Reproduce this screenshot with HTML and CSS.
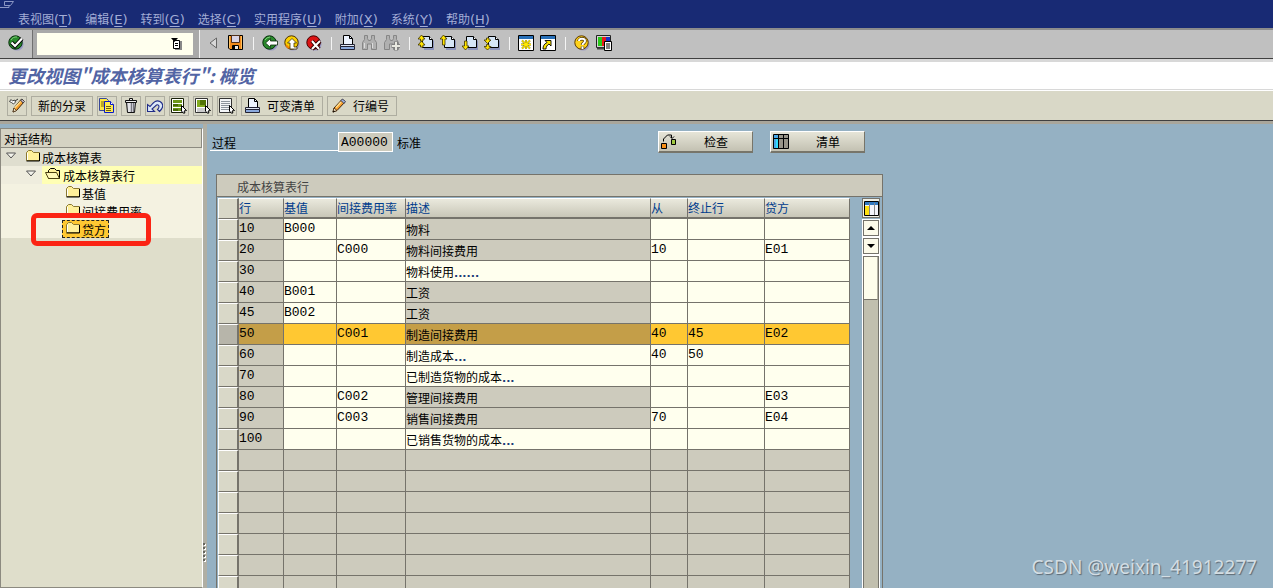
FILE: index.html
```html
<!DOCTYPE html>
<html lang="zh-CN">
<head>
<meta charset="utf-8">
<title>更改视图"成本核算表行": 概览</title>
<link rel="stylesheet" href="styles.css">
</head>
<body>
<svg class="defs" aria-hidden="true">
  <symbol id="i-ok" viewBox="0 0 16 16"><circle cx="9" cy="9" r="6.6" fill="#9a9ac4"/><circle cx="7.5" cy="7.5" r="6.7" fill="#2a8a2c" stroke="#062e0a"/><path d="M3 5a6 6 0 0 1 6-3" stroke="#7fd07a" fill="none"/><path d="M3.5 7.5 7 11 14 3.5" fill="none" stroke="#000" stroke-width="4"/><path d="M3.5 7.5 7 11 14 3.5" fill="none" stroke="#fff" stroke-width="2.2"/></symbol>
  <symbol id="i-save" viewBox="0 0 16 16"><path d="M.5.5h14v14H2L.5 13z" fill="#f08a1c" stroke="#000"/><path d="M3.500.500h8v7h-8z" fill="#d9d4e6" stroke="#50301a"/><path d="M4.500 10.500h6v4h-6z" fill="#e8e8e8" stroke="#000"/><path d="M5 11h2v3H5z" fill="#000"/><path d="M1.500 1v12M13.500 1v13" stroke="#ffc060"/></symbol>
  <symbol id="i-back" viewBox="0 0 16 16"><circle cx="9" cy="9" r="6.600" fill="#9a9ac4"/><circle cx="7.500" cy="7.500" r="6.700" fill="#2a8a2c" stroke="#062e0a"/><path d="M3 5a6 6 0 0 1 5-3" stroke="#7fd07a" fill="none"/><path d="M3.500 8 8.500 3.500v2.500h7v4h-7v2.500z" fill="#fff" stroke="#0c2a0c" stroke-width=".8"/></symbol>
  <symbol id="i-exit" viewBox="0 0 16 16"><circle cx="9" cy="9" r="6.600" fill="#9a9ac4"/><circle cx="7.500" cy="7.500" r="6.700" fill="#fbd000" stroke="#4a3000"/><path d="M2 10a6 6 0 0 0 4 3" stroke="#f08000" stroke-width="2" fill="none"/><path d="M8 3.500 12.500 8H10v4h3v2H6V8H3.500z" fill="#fff" stroke="#403000" stroke-width=".8"/></symbol>
  <symbol id="i-cancel" viewBox="0 0 16 16"><circle cx="9" cy="9" r="6.600" fill="#9a9ac4"/><circle cx="7.500" cy="7.500" r="6.700" fill="#dc1414" stroke="#400"/><path d="m6 6 7 8m1-8-8 8" stroke="#300" stroke-width="4"/><path d="m6 6 7 8m1-8-8 8" stroke="#fff" stroke-width="2"/></symbol>
  <symbol id="i-print" viewBox="0 0 16 16"><path d="M3.500.500h6l3 3v6h-9z" fill="#eef4ff" stroke="#000"/><path d="M9.500.500v3h3" fill="none" stroke="#000"/><path d="M.500 9.500h14v2H.500z" fill="#dfe6f4" stroke="#223"/><path d="M.500 11.500h14v3H.500z" fill="#8aa8dc" stroke="#223"/></symbol>
  <symbol id="i-find" viewBox="0 0 16 16"><path d="M2.500.500h3v3l1 2h2l1-2v-3h3v4l2 3v7h-5V9h-4v5.500h-5v-7l2-3z" fill="#b0b0b0" stroke="#868686"/><path d="M2.500 8v5m8-5v5" stroke="#dcdcdc"/></symbol>
  <symbol id="i-next" viewBox="0 0 16 16"><path d="M2.500.500h3v3l1 2h2l1-2v-3h3v4l2 3v7h-5V9h-4v5.500h-5v-7l2-3z" fill="#b0b0b0" stroke="#868686"/><path d="M12 6.500v9M7.500 11h9" stroke="#808080" stroke-width="4"/><path d="M12 7v8M8 11h8" stroke="#e8e8e0" stroke-width="2"/></symbol>
  <symbol id="i-page" viewBox="0 0 16 16"><path d="M6 4h8l2 2v9H6z" fill="#8c94bc"/><path d="M4.500 1.500h7l3 3v8h-10z" fill="#d6e6f6" stroke="#000"/><path d="M11.500 1.500v3h3" fill="#fff" stroke="#000"/></symbol>
  <symbol id="i-first" viewBox="0 0 16 16"><use href="#i-page"/><path d="M3.500 0 7 4H5v2H2.500V4H0zM3.500 6 7 10H5v2H2.500v-2H0z" fill="#ffe400" stroke="#3c3400" stroke-width=".8"/></symbol>
  <symbol id="i-prev" viewBox="0 0 16 16"><use href="#i-page"/><path d="M3.500 0 7 4H5v6H2.500V4H0z" fill="#ffe400" stroke="#3c3400" stroke-width=".8"/></symbol>
  <symbol id="i-nextp" viewBox="0 0 16 16"><use href="#i-page"/><path d="M3.500 15 7 11H5V6H2.500v5H0z" fill="#ffe400" stroke="#3c3400" stroke-width=".8"/></symbol>
  <symbol id="i-last" viewBox="0 0 16 16"><use href="#i-page"/><path d="M3.500 15 7 11.500H5v-2H2.500v2H0zM3.500 8.500 7 5H5V3H2.500v2H0z" fill="#ffe400" stroke="#3c3400" stroke-width=".8"/></symbol>
  <symbol id="i-session" viewBox="0 0 16 16"><path d="M.500.500h15v15H.500z" fill="#fff" stroke="#000"/><path d="M1 1h14v3H1z" fill="#2870b8"/><path d="M8 5v9M3 9.500h10M4 5.500l8 8m0-8-8 8" stroke="#807400" stroke-width="1.800"/><path d="M8 5v9M3 9.500h10M4 5.500l8 8m0-8-8 8" stroke="#ffe800" stroke-width="1.100"/></symbol>
  <symbol id="i-short" viewBox="0 0 16 16"><path d="M.500.500h15v15H.500z" fill="#fff" stroke="#000"/><path d="M1 1h14v3H1z" fill="#2870b8"/><path d="M5 5.500h6v5.500L9 9c-2 1-3 3-3 5H3c0-3 1-5 4-6.500z" fill="#ffe600" stroke="#000" stroke-width=".9"/></symbol>
  <symbol id="i-help" viewBox="0 0 16 16"><circle cx="9" cy="9" r="6.600" fill="#9a9ac4"/><circle cx="7.500" cy="7.500" r="6.700" fill="#ffd21a" stroke="#5a3800"/><path d="M5 6c0-3 6-3 6 0 0 2-2.500 2-2.500 4m0 1.500V14" fill="none" stroke="#4a3400" stroke-width="3.400"/><path d="M5 6c0-3 6-3 6 0 0 2-2.500 2-2.500 4m0 1.500V14" fill="none" stroke="#fff" stroke-width="2"/></symbol>
  <symbol id="i-layout" viewBox="0 0 16 16"><path d="M.500.500h14v12H.500z" fill="#d4d4d4" stroke="#222"/><path d="M2 2h4v9H2z" fill="#28c818"/><path d="M6 2h4v9H6z" fill="#e81818"/><path d="M10 2h4v9h-4z" fill="#1830c8"/><path d="M1 13.500h8" stroke="#444" stroke-width="2"/><path d="M8.500 6.500h7v9h-7z" fill="#fff" stroke="#000"/><path d="M10 9h4m-4 2h4m-4 2h4" stroke="#000"/></symbol>
  <symbol id="i-hist" viewBox="0 0 12 12"><path d="M4 3h7v9H4z" fill="#888"/><path d="M2.500 2.500h6v8h-6z" fill="#fff" stroke="#000"/><path d="M0 0h7L3.500 4zM4 5h3v1H4zm0 2h3v1H4z" fill="#000"/></symbol>
  <symbol id="i-pencil" viewBox="0 0 16 16"><path d="m2 14 1-4 8-8.500L14 4l-8 8.500z" fill="#f8a030" stroke="#40260c"/><path d="m2 14 1-4 3 2.500z" fill="#fff0d0" stroke="#40260c" stroke-width=".8"/><path d="m10 2.500 1.500-1.500L14.500 3.500 13 5.500z" fill="#9cb4e4" stroke="#445"/><path d="m5 9.500 5-5.500" stroke="#ffe090" stroke-width="1.400"/><path d="m1.500 14.500 1.500-2 1 1z"/></symbol>
  <symbol id="i-edit" viewBox="0 0 16 16"><path d="m4 14 1-4 7-8.500L15 4l-7.500 8.500z" fill="#f8a030" stroke="#40260c"/><path d="m4 14 1-4 2.500 2.500z" fill="#fff0d0" stroke="#40260c" stroke-width=".7"/><path d="m5.500 10 6-6.500" stroke="#ffe090" stroke-width="1.200"/><path d="m11.500 2 1.500-1 2.500 2.500L14 5z" fill="#c8b8c8" stroke="#444"/><path d="m.500 3.500 1.500-2 1.500 1.500 2-1 1 2-2 2-2-1.500z" fill="#fff" stroke="#333" stroke-width=".9"/><path d="m6 3 3-2" stroke="#333"/></symbol>
  <symbol id="i-copy" viewBox="0 0 16 16"><path d="M.500.500h7l2 2v10h-9z" fill="#ffe840" stroke="#384898"/><path d="M2 4h5M2 6h3M2 8h3" stroke="#786810"/><path d="M5.500 3.500h6l3 3v8h-9z" fill="#ffec50" stroke="#0818c8"/><path d="M11.500 3.500v3h3" fill="#fff" stroke="#0818c8"/><path d="M7 8.500h5m-5 2h5m-5 2h5" stroke="#706010"/></symbol>
  <symbol id="i-trash" viewBox="0 0 16 16"><path d="M3.500 4.500h9l-1 10h-7z" fill="#c8c8d0" stroke="#111"/><path d="M6 5v9" stroke="#fff"/><path d="M8.500 5v9m2-9v9" stroke="#77777f"/><path d="M2.500 2.500h11v2h-11zM6.500.500h3v2h-3z" fill="#eee" stroke="#111"/></symbol>
  <symbol id="i-undo" viewBox="0 0 16 16"><path d="M.500 6.500v7h7l-2.500-2.500 4.500-4c2.500-1 3.500 2 1 4.500l2 2c4.500-4 4-8 .500-10C9 1.500 7 4 3 8.500z" fill="#dce8f8" stroke="#202c88" stroke-width="1.100"/></symbol>
  <symbol id="i-cursor" viewBox="0 0 16 16"><path d="m10.500 7.500 5 5-2.500.500 1 2h-2l-1.500-2z" fill="#fff" stroke="#000"/></symbol>
  <symbol id="i-all" viewBox="0 0 16 16"><path d="M.500.500h12v14H.500z" fill="#fff" stroke="#182008"/><path d="M2 2h9v3H2zm0 4h9v3H2zm0 4h9v3H2z" fill="#6e9818"/><path d="M2 6h5v2H2zm0 5h5v2H2z" fill="#486808"/><use href="#i-cursor"/></symbol>
  <symbol id="i-block" viewBox="0 0 16 16"><path d="M.500.500h12v14H.500z" fill="#fff" stroke="#333"/><path d="M2 2h9v7H2z" fill="#82aa20"/><path d="M5 2h6v5H5z" fill="#527408"/><path d="M2 11h8M2 13h8" stroke="#999"/><use href="#i-cursor"/></symbol>
  <symbol id="i-none" viewBox="0 0 16 16"><path d="M.500.500h12v14H.500z" fill="#f4f6f8" stroke="#333"/><path d="M2 3.500h9m-9 2h9m-9 2h9m-9 2h9m-9 2h9" stroke="#8c949c"/><use href="#i-cursor"/></symbol>
  <symbol id="i-folder" viewBox="0 0 14 12"><path d="M.500 10.500v-8l2-2h3l2 2h6v8z" fill="#fff09a" stroke="#8a7830"/><path d="M1.500 10v-7" stroke="#fff"/><path d="M.500 11h13V3" fill="none" stroke="#000"/></symbol>
  <symbol id="i-open" viewBox="0 0 16 12"><path d="M3.500 10.500v-8l2-2h4l2 2h3v8z" fill="#fff09a" stroke="#000"/><path d="M.500 4.500h11l3 6h-11z" fill="#fff8b8" stroke="#4c4010"/></symbol>
  <symbol id="i-arrow" viewBox="0 0 10 8"><path d="M.500 1h9L5 6z" fill="#f4f4ec" stroke="#555"/></symbol>
  <symbol id="i-check" viewBox="0 0 16 16"><path d="M.500 9.500h5v5h-5z" fill="#f89018" stroke="#000"/><path d="M10.500 5.500h4v5h-4z" fill="#a0c840" stroke="#000"/><path d="M2.500 7.500V5l4-4h4v3M9 2.500l2 2 2-2" fill="none" stroke="#000"/></symbol>
  <symbol id="i-list" viewBox="0 0 16 16"><path d="M.500.500h15v14H.500z" fill="#989488" stroke="#000"/><path d="M1 1h5v13H1z" fill="#48a8e8"/><path d="M3 5h2v9H3z" fill="#30e0ff"/><path d="M5.500 1v13m5-13v13M1 4.500h14" stroke="#000"/></symbol>
  <symbol id="i-cols" viewBox="0 0 16 16"><path d="M.500.500h14v14H.500z" fill="#f4f4fa" stroke="#000"/><path d="M1 1h13v3H1z" fill="#3078c0"/><path d="M1 5h4v9H1z" fill="#ffe010"/><path d="M5.500 2v12m5-12v12" stroke="#888"/></symbol>
</svg>

<nav class="menubar" aria-label="菜单">
  <svg class="sysicon" viewBox="0 0 15 9"><path d="M4.500 1.500h9l-3 4h-6zM0 7.500h9v-2" fill="none" stroke="#8b96c4"/></svg>
  <button>表视图<span>(<u>T</u>)</span></button>
  <button>编辑<span>(<u>E</u>)</span></button>
  <button>转到<span>(<u>G</u>)</span></button>
  <button>选择<span>(<u>C</u>)</span></button>
  <button>实用程序<span>(<u>U</u>)</span></button>
  <button>附加<span>(<u>X</u>)</span></button>
  <button>系统<span>(<u>Y</u>)</span></button>
  <button>帮助<span>(<u>H</u>)</span></button>
</nav>

<div class="toolbar">
  <button class="ic enter" aria-label="回车"><svg><use href="#i-ok"/></svg></button>
  <div class="command">
    <label class="commandbox"><input type="text" aria-label="命令"><svg><use href="#i-hist"/></svg></label>
  </div>
  <div class="icons">
    <button class="ic tri" aria-label="收起"><svg viewBox="0 0 9 12"><path d="M7.500 1v10L1 6z" fill="#d8d8d8" stroke="#666"/></svg></button>
    <button class="ic" aria-label="保存"><svg><use href="#i-save"/></svg></button>
    <i class="sep"></i>
    <button class="ic" aria-label="返回"><svg><use href="#i-back"/></svg></button>
    <button class="ic" aria-label="退出"><svg><use href="#i-exit"/></svg></button>
    <button class="ic" aria-label="取消"><svg><use href="#i-cancel"/></svg></button>
    <i class="sep"></i>
    <button class="ic" aria-label="打印"><svg><use href="#i-print"/></svg></button>
    <button class="ic" aria-label="查找"><svg><use href="#i-find"/></svg></button>
    <button class="ic" aria-label="继续查找"><svg><use href="#i-next"/></svg></button>
    <i class="sep"></i>
    <button class="ic" aria-label="首页"><svg><use href="#i-first"/></svg></button>
    <button class="ic" aria-label="上一页"><svg><use href="#i-prev"/></svg></button>
    <button class="ic" aria-label="下一页"><svg><use href="#i-nextp"/></svg></button>
    <button class="ic" aria-label="末页"><svg><use href="#i-last"/></svg></button>
    <i class="sep"></i>
    <button class="ic" aria-label="新会话"><svg><use href="#i-session"/></svg></button>
    <button class="ic" aria-label="快捷方式"><svg><use href="#i-short"/></svg></button>
    <i class="sep"></i>
    <button class="ic" aria-label="帮助"><svg><use href="#i-help"/></svg></button>
    <button class="ic" aria-label="布局"><svg><use href="#i-layout"/></svg></button>
  </div>
</div>

<h1 class="title">更改视图"成本核算表行": 概览</h1>

<div class="appbar">
  <button aria-label="显示/更改"><svg><use href="#i-edit"/></svg></button>
  <button class="text">新的分录</button>
  <button aria-label="复制"><svg><use href="#i-copy"/></svg></button>
  <button aria-label="删除"><svg><use href="#i-trash"/></svg></button>
  <button aria-label="撤销"><svg><use href="#i-undo"/></svg></button>
  <button aria-label="全选"><svg><use href="#i-all"/></svg></button>
  <button aria-label="选择块"><svg><use href="#i-block"/></svg></button>
  <button aria-label="取消全选"><svg><use href="#i-none"/></svg></button>
  <button class="both"><svg><use href="#i-print"/></svg>可变清单</button>
  <button class="both"><svg><use href="#i-pencil"/></svg>行编号</button>
</div>

<div class="body">
  <aside class="side">
    <h2>对话结构</h2>
    <div class="node root"><svg class="arrow"><use href="#i-arrow"/></svg><div class="name"><svg class="folder"><use href="#i-folder"/></svg>成本核算表</div></div>
    <div class="node current"><svg class="arrow"><use href="#i-arrow"/></svg><div class="name"><svg class="open"><use href="#i-open"/></svg>成本核算表行</div></div>
    <div class="node leaf"><div class="name"><svg class="folder"><use href="#i-folder"/></svg>基值</div></div>
    <div class="node leaf"><div class="name"><svg class="folder"><use href="#i-folder"/></svg>间接费用率</div></div>
    <div class="node leaf"><div class="name picked"><svg class="folder"><use href="#i-folder"/></svg>贷方</div><div class="mark"></div></div>
  </aside>
  <div class="splitter"><i></i><i></i><i></i><i></i><i></i></div>

  <main class="main">
    <div class="form">
      <label class="lab" for="proc">过程</label><input id="proc" class="proc" value="A00000" readonly><span class="std">标准</span>
      <div class="actions">
        <button><svg><use href="#i-check"/></svg><span>检查</span></button>
        <button><svg><use href="#i-list"/></svg><span>清单</span></button>
      </div>
    </div>

    <section class="panel">
      <h2>成本核算表行</h2>
      <div class="gridwrap">
        <table>
          <colgroup><col class="c0"><col class="c1"><col class="c2"><col class="c3"><col class="c4"><col class="c5"><col class="c6"><col class="c7"></colgroup>
          <thead><tr><th></th><th>行</th><th>基值</th><th>间接费用率</th><th>描述</th><th>从</th><th>终止行</th><th>贷方</th></tr></thead>
          <tbody>
            <tr><td></td><td>10</td><td>B000</td><td></td><td>物料</td><td></td><td></td><td></td></tr>
            <tr><td></td><td>20</td><td></td><td>C000</td><td>物料间接费用</td><td>10</td><td></td><td>E01</td></tr>
            <tr class="sum"><td></td><td>30</td><td></td><td></td><td>物料使用<b>......</b></td><td></td><td></td><td></td></tr>
            <tr><td></td><td>40</td><td>B001</td><td></td><td>工资</td><td></td><td></td><td></td></tr>
            <tr><td></td><td>45</td><td>B002</td><td></td><td>工资</td><td></td><td></td><td></td></tr>
            <tr class="sel"><td></td><td>50</td><td></td><td>C001</td><td>制造间接费用</td><td>40</td><td>45</td><td>E02</td></tr>
            <tr class="sum"><td></td><td>60</td><td></td><td></td><td>制造成本<b>...</b></td><td>40</td><td>50</td><td></td></tr>
            <tr class="sum"><td></td><td>70</td><td></td><td></td><td>已制造货物的成本<b>...</b></td><td></td><td></td><td></td></tr>
            <tr><td></td><td>80</td><td></td><td>C002</td><td>管理间接费用</td><td></td><td></td><td>E03</td></tr>
            <tr><td></td><td>90</td><td></td><td>C003</td><td>销售间接费用</td><td>70</td><td></td><td>E04</td></tr>
            <tr class="sum"><td></td><td>100</td><td></td><td></td><td>已销售货物的成本<b>...</b></td><td></td><td></td><td></td></tr>
            <tr class="empty"><td></td><td></td><td></td><td></td><td></td><td></td><td></td><td></td></tr>
            <tr class="empty"><td></td><td></td><td></td><td></td><td></td><td></td><td></td><td></td></tr>
            <tr class="empty"><td></td><td></td><td></td><td></td><td></td><td></td><td></td><td></td></tr>
            <tr class="empty"><td></td><td></td><td></td><td></td><td></td><td></td><td></td><td></td></tr>
            <tr class="empty"><td></td><td></td><td></td><td></td><td></td><td></td><td></td><td></td></tr>
            <tr class="empty"><td></td><td></td><td></td><td></td><td></td><td></td><td></td><td></td></tr>
            <tr class="empty"><td></td><td></td><td></td><td></td><td></td><td></td><td></td><td></td></tr>
          </tbody>
        </table>
        <div class="scroll">
          <button class="config" aria-label="表设置"><svg><use href="#i-cols"/></svg></button>
          <button class="step" aria-label="向上"><svg viewBox="0 0 8 4"><path d="M4 0 8 4H0z"/></svg></button>
          <button class="step" aria-label="向下"><svg viewBox="0 0 8 4"><path d="M0 0h8L4 4z"/></svg></button>
          <div class="track"><div class="thumb"></div></div>
        </div>
      </div>
    </section>
  </main>
</div>
<div class="watermark">CSDN @weixin_41912277</div>
</body>
</html>
```

FILE: styles.css
```css
* { box-sizing: border-box; }

body {
  margin: 0;
  height: 100vh;
  overflow: hidden;
  display: flex;
  flex-direction: column;
  position: relative;
  background: #95b1c3;
  color: #000;
  font: 12px/18px "Noto Sans CJK SC", sans-serif;
}

button, input { font: inherit; color: inherit; margin: 0; padding: 0; border: 0; background: none; border-radius: 0; }
h1, h2 { margin: 0; font: inherit; }
svg { display: block; flex: none; width: 16px; height: 16px; }
.defs { position: absolute; width: 0; height: 0; }

.menubar {
  flex: none;
  height: 28px;
  padding: 10px 18px 0;
  display: flex;
  gap: 13px;
  background: #182a74;
  color: #a3add6;
}
.menubar button { display: flex; white-space: nowrap; }
.menubar span { font: 13px/19px "DejaVu Sans", sans-serif; }
.menubar u { text-underline-offset: 2px; }
.menubar .sysicon { position: absolute; left: 0; top: 0; width: 15px; height: 9px; }

.toolbar {
  flex: none;
  height: 34px;
  display: flex;
  background: #c0c0c0;
  border-top: 2px solid #8c8c8c;
  border-bottom: 3px solid #d8d8d8;
  box-shadow: inset 0 -1px #404040;
}
.ic { width: 16px; height: 26px; display: flex; align-items: center; }
.enter { margin: 0 8px; }
.command {
  width: 168px;
  padding: 3px 6px 3px 4px;
  margin-bottom: 1px;
  background: #a9a9a9;
  border-left: 1px solid #707070;
  border-right: 1px solid #f0f0f0;
}
.commandbox { display: flex; align-items: center; height: 22px; padding-right: 10px; background: #ffffee; }
.commandbox input { flex: 1; min-width: 0; height: 22px; outline: 0; }
.commandbox svg { width: 12px; height: 12px; }
.icons { display: flex; align-items: center; height: 26px; gap: 6px; padding-left: 9px; }
.icons .tri { margin-right: 4px; width: 9px; }
.tri svg { width: 9px; height: 12px; }
.sep { width: 1px; height: 13px; margin: 0 2px 0 3px; background: #f4f4f4; }

.title {
  flex: none;
  height: 29px;
  padding-left: 8px;
  background: #fff;
  border-bottom: 1px solid #fff;
  box-shadow: inset 0 -1px #d8d8d8;
  color: #5264a4;
  font: italic bold 18px/26px "Noto Sans CJK SC", sans-serif;
}

.appbar {
  flex: none;
  height: 33px;
  padding: 5px 7px 0;
  display: flex;
  gap: 4px;
  background: #d9d8c7;
  border-bottom: 3px solid #a9a69b;
  box-shadow: inset 0 -1px #404040;
}
.appbar button {
  height: 20px;
  min-width: 20px;
  display: flex;
  align-items: center;
  justify-content: center;
  border: 1px solid #aeada0;
  white-space: nowrap;
}
.appbar .text { padding: 0 6px; }
.appbar .both { padding: 0 7px 0 3px; gap: 6px; }

.body { flex: 1; min-height: 0; display: flex; }
.side {
  flex: none;
  width: 203px;
  margin-top: 4px;
  border: 1px solid #8c8a80;
  border-right-color: #fff;
  background: #dfdecb;
}
.side h2 {
  height: 19px;
  padding-left: 3px;
  line-height: 20px;
  background: #d5d3c3;
  border-right: 1px solid #8c8a80;
  border-bottom: 1px solid #8c8a80;
}
.node { height: 18px; display: flex; position: relative; line-height: 20px; background: #f4f2e1; }
.node .arrow { width: 10px; height: 8px; margin: 4px 10px 0 5px; }
.node .name { display: flex; gap: 2px; white-space: nowrap; }
.folder { width: 14px; height: 12px; margin-top: 2px; }
.open { width: 16px; height: 12px; margin-top: 2px; }
.root { background: #dfdecf; }
.current { padding-left: 20px; background: #efedde; }
.node.current .arrow { margin-right: 6px; }
.current .name { flex: 1; padding-left: 3px; background: #ffffb4; }
.leaf { padding-left: 61px; }
.leaf .name { padding: 0 3px 0 4px; }
.leaf .picked { padding: 0 2px 0 3px; border: 1px dashed #222; background: #ffc832; line-height: 18px; }
.picked .folder { margin-top: 1px; }
.mark {
  position: absolute;
  z-index: 2;
  left: 30px;
  top: -7px;
  width: 120px;
  height: 33px;
  border: 5px solid #fb2414;
  border-radius: 6px;
}

.splitter {
  flex: none;
  width: 4px;
  background: #b0afa4;
  display: flex;
  flex-direction: column;
  justify-content: flex-end;
  gap: 2px;
  padding-bottom: 27px;
}
.splitter i { width: 2px; height: 2px; background: #66655e; box-shadow: 1px 1px #fff; }

.main { flex: 1; min-width: 0; padding: 7px 0 0 3px; }
.form { display: flex; height: 22px; }
.lab { width: 128px; height: 20px; padding-left: 2px; line-height: 24px; border-bottom: 1px solid #fff; }
.proc {
  width: 55px;
  height: 20px;
  margin-top: 1px;
  padding-left: 2px;
  border: 1px solid #fff;
  background: #cdcbbd;
  font: 13px/18px "Liberation Mono", monospace;
}
.std { padding-left: 4px; line-height: 24px; }
.actions { display: flex; gap: 17px; margin-left: 237px; }
.actions button {
  width: 95px;
  height: 22px;
  display: flex;
  align-items: center;
  padding: 0 24px 0 2px;
  justify-content: space-between;
  border: 1px solid #fff;
  border-right-color: #77756a;
  border-bottom: 2px solid #77756a;
  background: linear-gradient(#e6e5d8, #c3c1b2);
}
.actions span { line-height: 20px; }

.panel { width: 667px; margin: 21px 0 0 6px; border: 1px solid #75736b; border-bottom: 0; }
.panel h2 {
  height: 22px;
  padding-left: 20px;
  line-height: 24px;
  color: #444;
  background: #cdcbbd;
  border-bottom: 1px solid #75736b;
}
.gridwrap { display: flex; justify-content: space-between; padding: 1px 2px 0 1px; }
table { width: 632px; table-layout: fixed; border-collapse: separate; border-spacing: 0; }
.c0 { width: 21px; }
.c1 { width: 45px; }
.c2 { width: 53px; }
.c3 { width: 69px; }
.c4 { width: 245px; }
.c5 { width: 37px; }
.c6 { width: 77px; }
.c7 { width: 85px; }
th, td { height: 21px; padding: 0; border: solid #75736b; border-width: 0 1px 1px 0; white-space: nowrap; overflow: hidden; }
th {
  text-align: left;
  font-weight: normal;
  line-height: 18px;
  color: #003c8c;
  border-top: 1px solid #fff;
  border-bottom-width: 2px;
  background: linear-gradient(#eae9dd, #c8c6b7);
}
td { background: #ffffee; font: 13px/20px "Liberation Mono", monospace; }
td:nth-child(5) { padding-top: 2px; font: 12px/18px "Noto Sans CJK SC", sans-serif; }
td:nth-child(2), td:nth-child(5), .empty td { background: #cdcbbd; }
.sum td:nth-child(5) { background: #ffffee; }
.sel td { background: #ffc832; }
.sel td:nth-child(2), .sel td:nth-child(5) { background: #c49e48; }
th:first-child, td:first-child {
  background: #d9d8c8;
  border-width: 1px 2px 1px 1px;
  border-color: #fff #75736b #75736b #fff;
}
.sel td:first-child { background: #b7b5aa; }
td b { color: #1c3c78; font: bold 11px/11px "DejaVu Sans", sans-serif; }

.scroll { width: 18px; display: flex; flex-direction: column; align-items: center; }
.config { width: 18px; height: 20px; padding: 1px 0 0 1px; border: 1px solid #75736b; background: #f0efe4; }
.step {
  width: 16px;
  height: 16px;
  margin-top: 2px;
  display: flex;
  align-items: center;
  justify-content: center;
  border: 1px solid #75736b;
  background: #fcfbea;
  outline: 1px solid #fff;
}
.step svg { width: 8px; height: 4px; }
.track { flex: 1; width: 16px; margin-top: 2px; border: 1px solid #75736b; background: #c1bfae; outline: 1px solid #fff; }
.thumb { height: 43px; background: #fdfdeb; border-right: 1px solid #b5b3a6; border-bottom: 1px solid #75736b; }

.watermark {
  position: absolute;
  right: 16px;
  bottom: 7px;
  color: #d3dde3;
  font: 19px/28px "Noto Sans", sans-serif;
  text-shadow: 1px 1px 1px #5d6a74;
}
```
